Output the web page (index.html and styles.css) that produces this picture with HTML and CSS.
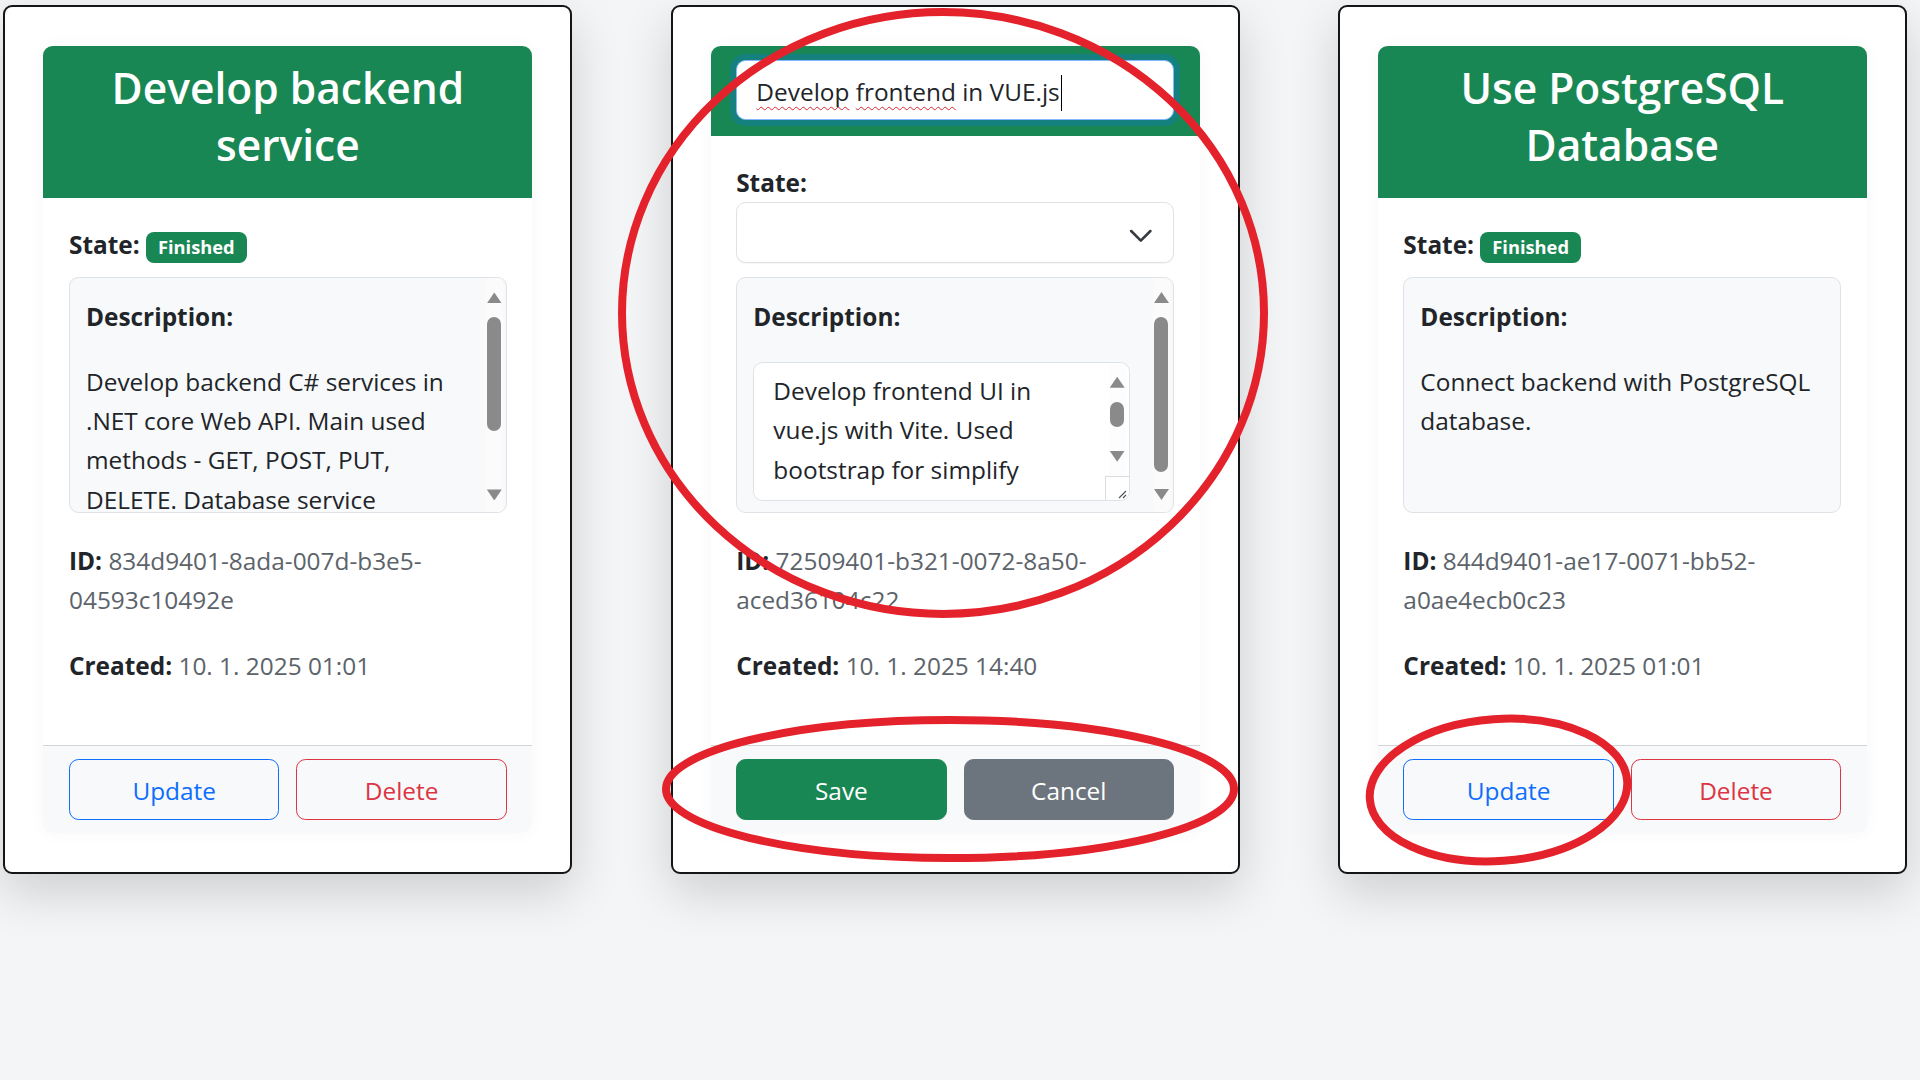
FILE: index.html
```html
<!DOCTYPE html>
<html lang="en">
<head>
<meta charset="utf-8">
<title>Tasks</title>
<link rel="stylesheet" href="styles.css">
</head>
<body>
<div class="board">

  <section class="task">
    <div class="tcard">
      <div class="tcard-header">
        <h3 class="title">Develop backend service</h3>
      </div>
      <div class="tcard-body">
        <p class="state"><strong>State:</strong> <span class="badge">Finished</span></p>
        <div class="desc has-sb">
          <p class="desc-label"><strong>Description:</strong></p>
          <p class="desc-text">Develop backend C# services in .NET core Web API. Main used methods - GET, POST, PUT, DELETE. Database service communicates with PostgreSQL.</p>
          <div class="sb sb-outer" aria-hidden="true">
            <span class="sb-up"></span>
            <span class="sb-thumb thumb-a"></span>
            <span class="sb-down"></span>
          </div>
        </div>
        <p class="meta id"><strong>ID:</strong> 834d9401-8ada-007d-b3e5-04593c10492e</p>
        <p class="meta created"><strong>Created:</strong> 10. 1. 2025 01:01</p>
      </div>
      <div class="tcard-footer">
        <button class="btn btn-outline-primary">Update</button>
        <button class="btn btn-outline-danger">Delete</button>
      </div>
    </div>
  </section>

  <section class="task">
    <div class="tcard">
      <div class="tcard-header edit">
        <div class="input"><span class="typo">Develop</span>&nbsp;<span class="typo">frontend</span>&nbsp;in VUE.js<span class="caret"></span></div>
      </div>
      <div class="tcard-body edit">
        <label class="field-label">State:</label>
        <div class="select">
          <svg class="chev" width="25.6" height="19.2" viewBox="0 0 16 12"><path d="m2 5 6 6 6-6" fill="none" stroke="#343a40" stroke-width="1.6" stroke-linecap="round" stroke-linejoin="round"/></svg>
        </div>
        <div class="desc has-sb">
          <p class="desc-label"><strong>Description:</strong></p>
          <div class="textarea">
            <p class="ta-text">Develop frontend UI in vue.js with Vite. Used bootstrap for simplify</p>
            <div class="sb sb-ta" aria-hidden="true">
              <span class="sb-up"></span>
              <span class="sb-thumb thumb-c"></span>
              <span class="sb-down"></span>
            </div>
            <div class="resizer" aria-hidden="true">
              <svg width="12" height="12" viewBox="0 0 12 12"><path d="M3 11 L10 4 M7 11 L10 8" stroke="#555" stroke-width="1.2" fill="none"/></svg>
            </div>
          </div>
          <div class="sb sb-outer" aria-hidden="true">
            <span class="sb-up"></span>
            <span class="sb-thumb thumb-b"></span>
            <span class="sb-down"></span>
          </div>
        </div>
        <p class="meta id"><strong>ID:</strong> 72509401-b321-0072-8a50-aced36104c22</p>
        <p class="meta created"><strong>Created:</strong> 10. 1. 2025 14:40</p>
      </div>
      <div class="tcard-footer">
        <button class="btn btn-success">Save</button>
        <button class="btn btn-secondary">Cancel</button>
      </div>
    </div>
  </section>

  <section class="task">
    <div class="tcard">
      <div class="tcard-header">
        <h3 class="title">Use PostgreSQL Database</h3>
      </div>
      <div class="tcard-body">
        <p class="state"><strong>State:</strong> <span class="badge">Finished</span></p>
        <div class="desc">
          <p class="desc-label"><strong>Description:</strong></p>
          <p class="desc-text">Connect backend with PostgreSQL database.</p>
        </div>
        <p class="meta id"><strong>ID:</strong> 844d9401-ae17-0071-bb52-a0ae4ecb0c23</p>
        <p class="meta created"><strong>Created:</strong> 10. 1. 2025 01:01</p>
      </div>
      <div class="tcard-footer">
        <button class="btn btn-outline-primary">Update</button>
        <button class="btn btn-outline-danger">Delete</button>
      </div>
    </div>
  </section>

</div>

<svg class="annot" width="1920" height="1080" viewBox="0 0 1920 1080" aria-hidden="true">
  <g fill="none" stroke="#e4222b" stroke-width="8">
    <ellipse cx="943" cy="313" rx="321" ry="301"/>
    <ellipse cx="950" cy="789" rx="284" ry="69"/>
    <ellipse cx="1498.5" cy="790" rx="129" ry="71" transform="rotate(-4 1498.5 790)"/>
  </g>
</svg>
</body>
</html>
```

FILE: styles.css
```css
* { box-sizing: border-box; }

html, body { margin: 0; }

body {
  position: relative;
  height: 1080px;
  overflow: hidden;
  background: #f4f5f7;
  font-family: "Open Sans", "Noto Sans", sans-serif;
  font-size: 24.4px;
  line-height: 39.2px;
  color: #212529;
}

.board {
  display: flex;
  align-items: flex-start;
  gap: 98.2px;
  height: 935px;
  padding: 5px 0 0 3.4px;
  overflow: hidden;
}

.task {
  flex: 0 0 569px;
  height: 869px;
  background: #fff;
  border: 2px solid #151515;
  border-radius: 9px;
  padding: 39px 38px;
  box-shadow: 0 18px 50px rgba(0, 0, 0, 0.16);
}

.tcard {
  height: 100%;
  display: flex;
  flex-direction: column;
  background: #fff;
  border-radius: 9.6px;
  box-shadow: 0 0 18px rgba(0, 0, 0, 0.035);
}

.tcard-header {
  background: #198754;
  color: #fff;
  padding: 12.8px 25.6px;
  border-radius: 9.6px 9.6px 0 0;
}

.tcard-header.edit {
  padding: 14px 25.6px 16px;
}

.title {
  margin: 0 0 12.8px;
  font-size: 42.5px;
  line-height: 57px;
  font-weight: 600;
  text-align: center;
}

.tcard-body {
  flex: 1;
  padding: 27px 25.6px 0;
}

.tcard-body.edit {
  padding-top: 26.5px;
}

.state {
  margin: 0 0 12.8px;
}

strong, .field-label {
  font-weight: 700;
}

.badge {
  display: inline-block;
  background: #198754;
  color: #fff;
  font-size: 18.3px;
  font-weight: 700;
  line-height: 1;
  padding: 6.4px 11.9px;
  border-radius: 8px;
}

.desc {
  position: relative;
  height: 236px;
  overflow: hidden;
  background: #f8f9fa;
  border: 1px solid #dee2e6;
  border-radius: 9.6px;
  padding: 18.9px 8px 0 16px;
}

.desc.has-sb {
  padding-right: 40px;
}

.desc p {
  margin: 0;
}

.desc .desc-label {
  margin-bottom: 25.6px;
}

/* fake classic scrollbars */
.sb {
  position: absolute;
  top: 0;
  right: 3px;
  bottom: 0;
  width: 17px;
  display: flex;
  flex-direction: column;
  align-items: center;
  padding: 14px 0 12px;
  background: #fbfbfb;
}

.sb-up, .sb-down {
  width: 15px;
  height: 11px;
  background: #8a8a8a;
  flex: none;
}

.sb-up { clip-path: polygon(50% 0, 100% 100%, 0 100%); }
.sb-down { clip-path: polygon(0 0, 100% 0, 50% 100%); margin-top: auto; }

.sb-thumb {
  width: 14px;
  margin-top: 14px;
  border-radius: 7px;
  background: #8a8a8a;
  flex: none;
}

.thumb-a { height: 114px; }
.thumb-b { height: 155px; }
.thumb-c { height: 25px; }

.sb-ta {
  bottom: 24px;
  padding: 14px 0 14px;
  background: #fdfdfd;
}

.textarea {
  position: relative;
  width: 376.5px;
  height: 139px;
  overflow: hidden;
  background: #fff;
  border: 1px solid #dee2e6;
  border-radius: 9.6px;
  padding: 8.5px 40px 0 19.2px;
}

.desc .ta-text {
  margin: 0;
}

.resizer {
  position: absolute;
  right: 0;
  bottom: 0;
  width: 24px;
  height: 24px;
  border-top: 1px solid #dcdcdc;
  border-left: 1px solid #dcdcdc;
  background: #fff;
  display: flex;
  align-items: flex-end;
  justify-content: flex-end;
  padding: 0 1px 1px 0;
}

.meta {
  margin: 0;
  color: #5c636a;
}

.meta strong {
  color: #212529;
}

.meta.id {
  margin-top: 27.9px;
}

.meta.created {
  margin-top: 26.6px;
}

.field-label {
  display: block;
  margin: 0;
}

.select {
  height: 61px;
  margin: 0.3px 0 14px;
  border: 1px solid #dee2e6;
  border-radius: 9.6px;
  background: #fff;
  display: flex;
  align-items: center;
  justify-content: flex-end;
  padding-right: 19.2px;
  box-shadow: 0 1px 1px rgba(0, 0, 0, 0.04);
}

.input {
  height: 60px;
  background: #fff;
  border: 1px solid #86b7fe;
  border-radius: 9.6px;
  box-shadow: 0 0 0 6px rgba(13, 110, 253, 0.25);
  padding: 3px 19.2px 0;
  display: flex;
  align-items: center;
  white-space: nowrap;
  color: #212529;
}

.typo {
  text-decoration: underline wavy #d9262e;
  text-decoration-thickness: 1px;
  text-underline-offset: 5px;
  text-decoration-skip-ink: none;
}

.caret {
  display: inline-block;
  width: 1px;
  height: 36px;
  background: #000;
  margin-left: 1px;
  align-self: center;
  transform: translateY(1px);
}

.tcard-footer {
  display: flex;
  gap: 17px;
  padding: 12.8px 25.6px;
  background: #f8f9fa;
  border-top: 1px solid #d3d4d5;
  border-radius: 0 0 9.6px 9.6px;
}

.btn {
  flex: 1;
  height: 61.5px;
  font: inherit;
  line-height: 38.4px;
  border: 1px solid transparent;
  border-radius: 9.6px;
  background: transparent;
  padding: 3px 0 0;
  display: flex;
  align-items: center;
  justify-content: center;
}

.btn-outline-primary { color: #0d6efd; border-color: #0d6efd; }
.btn-outline-danger { color: #dc3545; border-color: #dc3545; }
.btn-success { color: #fff; background: #198754; border-color: #198754; }
.btn-secondary { color: #fff; background: #6c757d; border-color: #6c757d; }

.annot {
  position: absolute;
  left: 0;
  top: 0;
  pointer-events: none;
}
```
